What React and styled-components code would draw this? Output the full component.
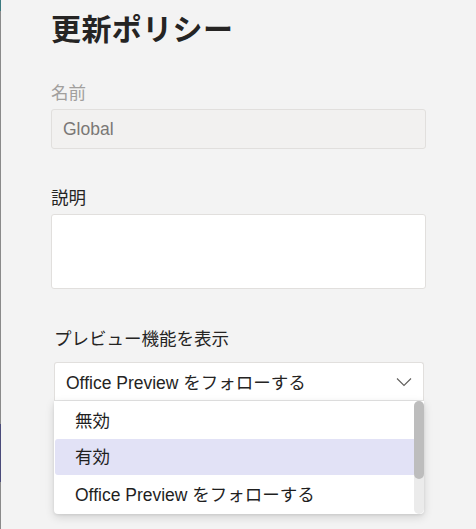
import React from "react";
import styled, { createGlobalStyle } from "styled-components";

const GlobalStyle = createGlobalStyle`
  html, body {
    margin: 0;
    padding: 0;
    background: #f3f3f3;
  }
  body {
    font-family: "Segoe UI", "Liberation Sans", "Noto Sans CJK JP", sans-serif;
    color: #252423;
  }
`;

const options = [
  { text: "無効", cjk: true },
  { text: "有効", cjk: true, active: true },
  { text: "Office Preview をフォローする" },
];

const App = () => {
  return (
    <Page>
      <GlobalStyle />
      <EdgeStrip>
        <StripPart color="#3b7a80" size="11px" />
        <StripPart color="#8a8a8a" grow />
        <StripPart color="#4a4b7a" size="58px" />
        <StripPart color="#8a8a8a" size="47px" />
      </EdgeStrip>
      <Main>
        <Title>更新ポリシー</Title>

        <Field gap="31px">
          <Label muted>名前</Label>
          <TextInput disabled>Global</TextInput>
        </Field>

        <Field gap="37px">
          <Label>説明</Label>
          <TextArea />
        </Field>

        <DropField>
          <Label>プレビュー機能を表示</Label>
          <SelectBox>
            <span>Office Preview をフォローする</span>
            <svg width="16" height="10" viewBox="0 0 16 10">
              <path d="M1 1.5 L8 8.5 L15 1.5" fill="none" stroke="#605e5c" strokeWidth="1.1" />
            </svg>
          </SelectBox>
          <Menu>
            <MenuList>
              {options.map((o) => (
                <MenuItem key={o.text} active={o.active} cjk={o.cjk}>
                  {o.text}
                </MenuItem>
              ))}
            </MenuList>
            <ScrollTrack>
              <ScrollThumb />
            </ScrollTrack>
          </Menu>
        </DropField>
      </Main>
    </Page>
  );
};

export default App;

const Page = styled.div`
  display: flex;
  width: 476px;
  height: 529px;
  overflow: hidden;
  background: #f3f3f3;
`;

const EdgeStrip = styled.div`
  width: 1px;
  display: flex;
  flex-direction: column;
`;

const StripPart = styled.div`
  background: ${(p) => p.color};
  height: ${(p) => p.size || "auto"};
  flex: ${(p) => (p.grow ? 1 : "none")};
`;

const Main = styled.div`
  flex: 1;
  display: flex;
  flex-direction: column;
  padding: 10px 50px 0 50px;
`;

const Title = styled.h1`
  margin: 0;
  font-size: 30px;
  line-height: 40px;
  font-weight: 700;
  color: #252423;
  letter-spacing: 0.4px;
`;

const Field = styled.div`
  display: flex;
  flex-direction: column;
  gap: 4px;
  margin-top: ${(p) => p.gap};
`;

const Label = styled.div`
  font-size: 17.5px;
  line-height: 24px;
  color: ${(p) => (p.muted ? "#a19f9d" : "#252423")};
`;

const TextInput = styled.div`
  height: 40px;
  box-sizing: border-box;
  padding: 0 11px;
  display: flex;
  align-items: center;
  border: 1px solid #e1dfdd;
  border-radius: 3px;
  background: ${(p) => (p.disabled ? "#f2f1f0" : "#fff")};
  color: #7a7876;
  font-size: 17.5px;
`;

const TextArea = styled.div`
  height: 75px;
  box-sizing: border-box;
  border: 1px solid #e1dfdd;
  border-radius: 3px;
  background: #fff;
`;

const DropField = styled.div`
  display: flex;
  flex-direction: column;
  margin: 38px 2px 0 3px;
`;

const SelectBox = styled.div`
  margin-top: 11px;
  height: 39px;
  box-sizing: border-box;
  display: flex;
  align-items: center;
  justify-content: space-between;
  padding: 0 11px 0 11px;
  background: #fff;
  border: 1px solid #e1dfdd;
  border-bottom-color: #e6e6e6;
  border-radius: 3px 3px 0 0;
  font-size: 17.5px;
  color: #252423;
`;

const Menu = styled.div`
  height: 113px;
  display: flex;
  background: #fff;
  border-radius: 0 0 4px 4px;
  box-shadow: 0 3px 10px rgba(0, 0, 0, 0.14), 0 1px 3px rgba(0, 0, 0, 0.08);
`;

const MenuList = styled.div`
  flex: 1;
  display: flex;
  flex-direction: column;
  padding: 2px 0 2px 1px;
`;

const MenuItem = styled.div`
  height: 36px;
  box-sizing: border-box;
  display: flex;
  align-items: center;
  padding-left: 20px;
  padding-bottom: ${(p) => (p.cjk ? "4px" : "0")};
  font-size: 17.5px;
  color: #1f1f1f;
  border-radius: 3px 0 0 3px;
  background: ${(p) => (p.active ? "#e2e2f6" : "transparent")};
`;

const ScrollTrack = styled.div`
  width: 10px;
  background: #ebebeb;
  border-radius: 5px;
  display: flex;
  flex-direction: column;
`;

const ScrollThumb = styled.div`
  height: 78px;
  background: #bdbdbd;
  border-radius: 5px;
`;
